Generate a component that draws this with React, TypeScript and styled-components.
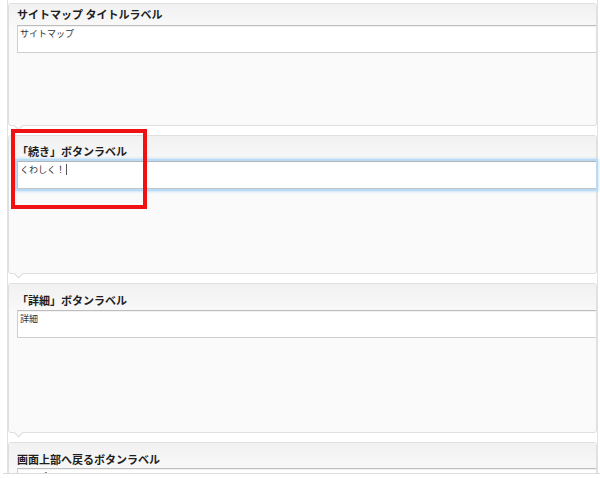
import React from 'react';
import styled, { createGlobalStyle } from 'styled-components';

const GlobalStyle = createGlobalStyle`
  body {
    margin: 0;
    background: #fff;
    font-family: "Noto Sans CJK JP", "Liberation Sans", sans-serif;
  }
`;

const Page = styled.div`
  position: relative;
  width: 600px;
  height: 478px;
  padding-left: 3px;
  box-sizing: border-box;
`;

const Viewport = styled.div`
  height: 474px;
  box-sizing: border-box;
  padding-left: 4px;
  border-bottom: 1px solid #dcdcdc;
  overflow: hidden;
`;

const Frame = styled.div`
  width: 591px;
  min-height: 100%;
  box-sizing: border-box;
  border-left: 1px solid #e2e2e2;
  border-right: 1px solid #e2e2e2;
  padding-top: 3px;
  display: flex;
  flex-direction: column;
  gap: 9px;
`;

const Card = styled.section`
  position: relative;
  border: 1px solid #dfdfdf;
  border-radius: 3px;
  background: #fafafa;

  &::after {
    content: '';
    position: absolute;
    left: 6px;
    bottom: -4px;
    width: 6px;
    height: 6px;
    background: #fafafa;
    border-right: 1px solid #dcdcdc;
    border-bottom: 1px solid #dcdcdc;
    transform: rotate(45deg);
  }
`;

const Head = styled.div<{ $top: number; $gap: number }>`
  padding: ${p => p.$top}px 8px ${p => p.$gap}px;
  background: linear-gradient(#f1f1f1, #f8f8f8);
  border-radius: 3px 3px 0 0;
`;

const Title = styled.h3`
  margin: 0;
  font-size: 11px;
  line-height: 15px;
  font-weight: 700;
  color: #1e1e1e;
`;

const Field = styled.div<{ $focus?: boolean }>`
  margin-left: 8px;
  height: 28px;
  box-sizing: border-box;
  padding: 1px 2px;
  background: #fff;
  border: 1px solid ${p => (p.$focus ? '#c4c4c4' : '#cfcfcf')};
  border-top-color: ${p => (p.$focus ? '#b4b4b4' : '#bdbdbd')};
  border-right: none;
  box-shadow: ${p =>
    p.$focus
      ? '0 0 0 2px #b8dcf8, 0 0 3px 2px #a8d2f3'
      : 'inset 0 1px 1px rgba(0, 0, 0, 0.06)'};
  font-size: 9px;
  line-height: 13px;
  color: #333;
  white-space: nowrap;
`;

const Caret = styled.span`
  display: inline-block;
  width: 1px;
  height: 11px;
  margin-left: 1px;
  vertical-align: -2px;
  background: #555;
`;

const Body = styled.div<{ $h: number }>`
  height: ${p => p.$h}px;
`;

const Marker = styled.div`
  position: absolute;
  left: 11px;
  top: 129px;
  width: 136px;
  height: 80px;
  box-sizing: border-box;
  border: 4px solid #f01212;
`;

type Section = {
  title: string;
  value: string;
  top: number;
  gap: number;
  body: number;
  focus?: boolean;
};

const sections: Section[] = [
  { title: 'サイトマップ タイトルラベル', value: 'サイトマップ', top: 3, gap: 3, body: 72 },
  { title: '「続き」ボタンラベル', value: 'くわしく！', top: 8, gap: 2, body: 84, focus: true },
  { title: '「詳細」ボタンラベル', value: '詳細', top: 9, gap: 2, body: 94 },
  { title: '画面上部へ戻るボタンラベル', value: 'トップページへ', top: 9, gap: 1, body: 90 },
];

const App: React.FC = () => (
  <>
    <GlobalStyle />
    <Page>
      <Viewport>
        <Frame>
          {sections.map(s => (
            <Card key={s.title}>
              <Head $top={s.top} $gap={s.gap}>
                <Title>{s.title}</Title>
              </Head>
              <Field $focus={s.focus}>
                {s.value}
                {s.focus && <Caret />}
              </Field>
              <Body $h={s.body} />
            </Card>
          ))}
        </Frame>
      </Viewport>
      <Marker />
    </Page>
  </>
);

export default App;
